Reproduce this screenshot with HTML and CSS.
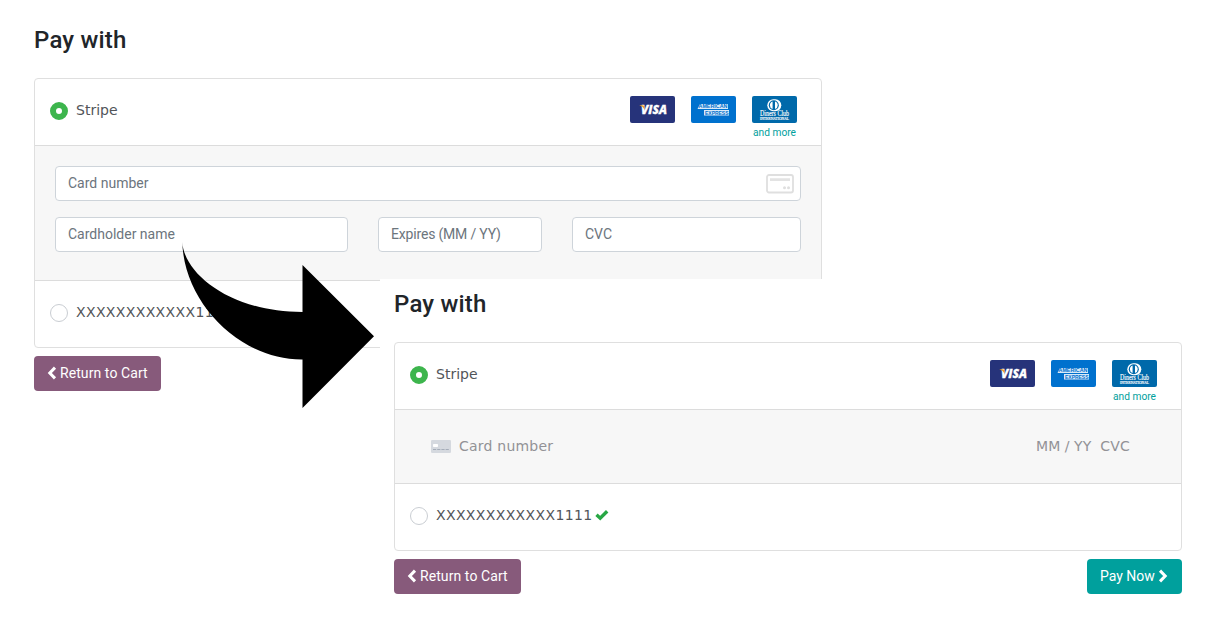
FILE: index.html
```html
<!DOCTYPE html>
<html lang="en">
<head>
<meta charset="utf-8">
<title>Pay with</title>
<link rel="stylesheet" href="styles.css">
</head>
<body>
<svg class="defs" width="0" height="0" aria-hidden="true">
  <symbol id="chevron-left" viewBox="0 0 10 14"><path d="M8 1.6 2.8 7 8 12.4" fill="none" stroke="currentColor" stroke-width="3"/></symbol>
  <symbol id="chevron-right" viewBox="0 0 10 14"><path d="M2 1.6 7.2 7 2 12.4" fill="none" stroke="currentColor" stroke-width="3"/></symbol>
</svg>

<section class="panel">
  <h1>Pay with</h1>
  <div class="card">
    <div class="method">
      <span class="radio checked"></span><span class="label">Stripe</span>
      <div class="brands">
        <svg viewBox="0 0 45 27">
          <rect width="45" height="27" rx="2" fill="#26337a"/>
          <text x="11" y="18" class="visa-text" textLength="26" lengthAdjust="spacingAndGlyphs">VISA</text>
          <path d="M9.3 9.2h3.5q1 0 1.2 1l.7 3.5q-1.5-3.2-5.4-4.5z" fill="#f0a029"/>
        </svg>
        <svg viewBox="0 0 45 27">
          <rect width="45" height="27" rx="2" fill="#0071ce"/>
          <path d="M6.5 13 9 8h28v5zM13 14h25v5.5H13z" fill="#fff" opacity=".85"/>
          <text x="7.5" y="12.4" class="amex-text" textLength="29" lengthAdjust="spacingAndGlyphs">AMERICAN</text>
          <text x="14" y="18.6" class="amex-text" textLength="23.5" lengthAdjust="spacingAndGlyphs">EXPRESS</text>
        </svg>
        <div class="last">
          <svg viewBox="0 0 45 27">
            <rect width="45" height="27" rx="2" fill="#0069aa"/>
            <rect x="15.3" y="3.2" width="14" height="12" rx="6" fill="#fff"/>
            <circle cx="21.8" cy="9.2" r="5" fill="#0069aa"/>
            <path d="M20.6 5.4a4 4 0 0 0 0 7.6zM23 5.4a4 4 0 0 1 0 7.6z" fill="#fff"/>
            <text x="8" y="20.3" class="diners-text" textLength="29" lengthAdjust="spacingAndGlyphs">Diners Club</text>
            <text x="8" y="24" class="diners-sub" textLength="29" lengthAdjust="spacingAndGlyphs">INTERNATIONAL</text>
          </svg>
          <span class="more">and more</span>
        </div>
      </div>
    </div>
    <div class="form">
      <div class="field">Card number
        <svg class="card-outline" width="28" height="20" viewBox="0 0 28 20"><rect x="1" y="1" width="26" height="17.5" rx="2" fill="none" stroke="#dfdfdf" stroke-width="1.8"/><path d="M4 5.6h20" stroke="#e3e3e3" stroke-width="2.8"/><circle cx="18.5" cy="13.7" r="1.5" fill="#dfdfdf"/><circle cx="22.5" cy="13.7" r="1.5" fill="#dfdfdf"/></svg>
      </div>
      <div class="field-row">
        <div class="field">Cardholder name</div>
        <div class="field expires">Expires (MM / YY)</div>
        <div class="field">CVC</div>
      </div>
    </div>
    <div class="method saved">
      <span class="radio"></span><span class="label number">XXXXXXXXXXXX1111</span>
    </div>
  </div>
  <div class="actions">
    <div class="btn back"><svg><use href="#chevron-left"/></svg><span>Return to Cart</span></div>
  </div>
</section>

<section class="panel front">
  <h1>Pay with</h1>
  <div class="card">
    <div class="method">
      <span class="radio checked"></span><span class="label">Stripe</span>
      <div class="brands">
        <svg viewBox="0 0 45 27">
          <rect width="45" height="27" rx="2" fill="#26337a"/>
          <text x="11" y="18" class="visa-text" textLength="26" lengthAdjust="spacingAndGlyphs">VISA</text>
          <path d="M9.3 9.2h3.5q1 0 1.2 1l.7 3.5q-1.5-3.2-5.4-4.5z" fill="#f0a029"/>
        </svg>
        <svg viewBox="0 0 45 27">
          <rect width="45" height="27" rx="2" fill="#0071ce"/>
          <path d="M6.5 13 9 8h28v5zM13 14h25v5.5H13z" fill="#fff" opacity=".85"/>
          <text x="7.5" y="12.4" class="amex-text" textLength="29" lengthAdjust="spacingAndGlyphs">AMERICAN</text>
          <text x="14" y="18.6" class="amex-text" textLength="23.5" lengthAdjust="spacingAndGlyphs">EXPRESS</text>
        </svg>
        <div class="last">
          <svg viewBox="0 0 45 27">
            <rect width="45" height="27" rx="2" fill="#0069aa"/>
            <rect x="15.3" y="3.2" width="14" height="12" rx="6" fill="#fff"/>
            <circle cx="21.8" cy="9.2" r="5" fill="#0069aa"/>
            <path d="M20.6 5.4a4 4 0 0 0 0 7.6zM23 5.4a4 4 0 0 1 0 7.6z" fill="#fff"/>
            <text x="8" y="20.3" class="diners-text" textLength="29" lengthAdjust="spacingAndGlyphs">Diners Club</text>
            <text x="8" y="24" class="diners-sub" textLength="29" lengthAdjust="spacingAndGlyphs">INTERNATIONAL</text>
          </svg>
          <span class="more">and more</span>
        </div>
      </div>
    </div>
    <div class="inline-form">
      <svg width="20" height="13" viewBox="0 0 20 13"><rect width="20" height="13" rx="1.3" fill="#d5d9df"/><rect x="2" y="4" width="5" height="3" rx=".8" fill="#fff"/><path d="M2 9.5h16" stroke="#a5adb9" stroke-width="1" stroke-dasharray="3.2 1"/></svg>
      <span class="num">Card number</span>
      <span class="expiry">MM / YY</span>
      <span class="cvc">CVC</span>
    </div>
    <div class="method saved">
      <span class="radio"></span><span class="label number">XXXXXXXXXXXX1111</span>
      <svg class="check" width="14" height="12" viewBox="0 0 14 12"><path d="M1.5 5.8 5.2 9.2 12.2 2.2" fill="none" stroke="#28a745" stroke-width="3.4"/></svg>
    </div>
  </div>
  <div class="actions">
    <div class="btn back"><svg><use href="#chevron-left"/></svg><span>Return to Cart</span></div>
    <div class="btn pay"><span>Pay Now</span><svg><use href="#chevron-right"/></svg></div>
  </div>
</section>

<svg class="arrow" width="194" height="167" viewBox="0 0 194 167"><path d="M2.3 1C4 33 51 71 122.5 71V24L194 95.3 122.5 167V118.5C61 119 4 63 2.3 1Z"/></svg>
</body>
</html>
```

FILE: styles.css
```css
* { box-sizing: border-box; }
body {
  margin: 0;
  width: 1225px;
  height: 624px;
  position: relative;
  overflow: hidden;
  background: #fff;
  font: 14px/21px Roboto, sans-serif;
}
.defs { position: absolute; }
svg { display: block; flex: none; }
.panel { width: 822px; padding: 26px 0 0 34px; }
.front {
  position: absolute;
  left: 380px;
  top: 279px;
  width: 845px;
  height: 345px;
  padding: 11px 43px 0 14px;
  background: #fff;
}
h1 {
  margin: 0;
  height: 52px;
  font-size: 24px;
  line-height: 29px;
  font-weight: 500;
  letter-spacing: .2px;
  color: #212529;
}
.card { border: 1px solid #dfdfdf; border-radius: 4px; overflow: hidden; }
.method { display: flex; height: 66px; padding: 17px 24px 0 15px; }
.radio {
  width: 18px;
  height: 18px;
  margin-top: 6px;
  border: 1px solid #c9cdd2;
  border-radius: 50%;
  background: #fff;
}
.radio.checked { border: 6px solid #3db54d; }
.label {
  margin: 4px 0 0 8px;
  font-family: "DejaVu Sans", sans-serif;
  color: #525559;
}
.number { letter-spacing: .36px; }
.brands { display: flex; gap: 16px; margin-left: auto; }
.brands svg { width: 45px; height: 27px; overflow: visible; }
.last { width: 45px; text-align: center; }
.more {
  display: block;
  font-size: 10.2px;
  line-height: 20px;
  color: #00a09d;
  white-space: nowrap;
}
.visa-text { font: italic 800 12px "Open Sans", sans-serif; fill: #fff; stroke: #fff; stroke-width: .3px; }
.amex-text { font: bold 5.4px "Liberation Sans", sans-serif; fill: #0071ce; }
.diners-text { font: 7.2px "Liberation Serif", serif; fill: #fff; stroke: #fff; stroke-width: .15px; }
.diners-sub { font: 3.5px "Liberation Serif", serif; fill: #fff; stroke: #fff; stroke-width: .15px; }
.form {
  height: 135px;
  padding: 20px;
  border-top: 1px solid #dcdcdc;
  background: #f7f7f7;
}
.field {
  display: flex;
  justify-content: space-between;
  align-items: center;
  height: 35px;
  padding: 0 6px 1px 12px;
  border: 1px solid #ced4da;
  border-radius: 4px;
  background: #fff;
  color: #6c757d;
}
.expires { letter-spacing: -.18px; }
.card-outline { margin-top: 2px; }
.field-row {
  display: grid;
  grid-template-columns: 293px 164px 229px;
  gap: 30px;
  margin-top: 16px;
}
.saved { height: 67px; border-top: 1px solid #dcdcdc; padding-top: 17px; }
.inline-form {
  display: flex;
  align-items: center;
  height: 74px;
  padding: 0 51px 0 36px;
  border-top: 1px solid #dcdcdc;
  background: #f7f7f7;
  font-family: "DejaVu Sans", sans-serif;
  color: #929296;
}
.num { margin-left: 8px; letter-spacing: .22px; }
.expiry { margin-left: auto; letter-spacing: .05px; }
.cvc { margin-left: 9px; letter-spacing: .2px; }
.check { margin: 8px 0 0 3px; }
.actions { display: flex; justify-content: space-between; margin-top: 8px; }
.btn {
  display: flex;
  align-items: center;
  height: 35px;
  padding: 0 13px 1px;
  border-radius: 4px;
  color: #fff;
}
.btn svg { width: 10px; height: 14px; }
.back { width: 127px; background: #875a7b; }
.back span { margin-left: 3px; letter-spacing: .08px; white-space: nowrap; }
.pay { width: 95px; background: #00a09d; }
.pay svg { margin-left: 3px; }
.arrow { position: absolute; left: 180px; top: 241px; overflow: visible; }
```
